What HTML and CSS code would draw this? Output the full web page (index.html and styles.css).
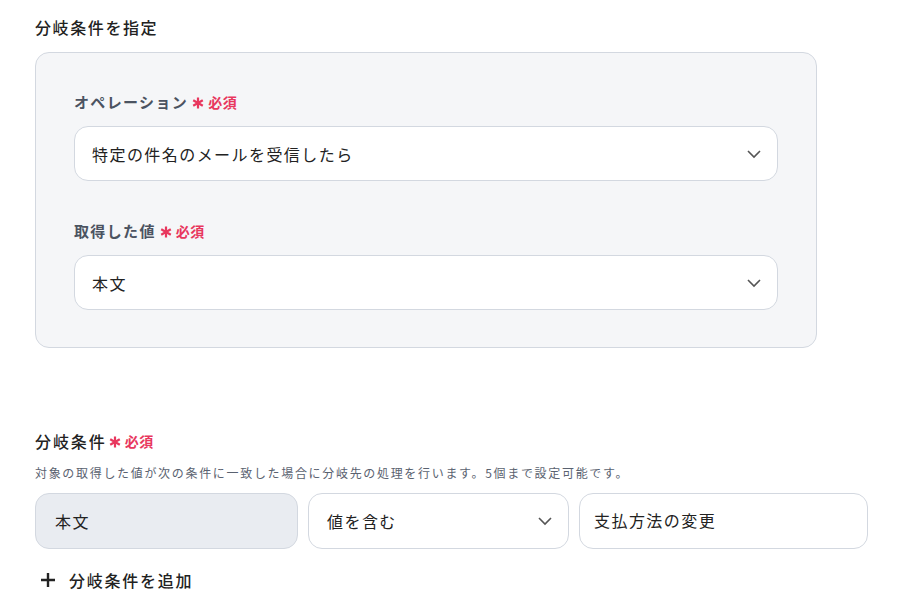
FILE: index.html
```html
<!DOCTYPE html>
<html lang="ja">
<head>
  <meta charset="UTF-8" />
  <meta name="viewport" content="width=device-width, initial-scale=1.0"/>
  <title>分岐条件を指定</title>
  <link rel="stylesheet" href="styles.css">
</head>
<body>

  <h2 class="section-title">分岐条件を指定</h2>

  <div class="panel">
    <div class="field">
      <label class="field-label">オペレーション<span class="req"><svg class="star" viewBox="0 0 12 12" width="12" height="12"><path d="M6 0.5v11M1.2 3.2l9.6 5.6M1.2 8.8l9.6-5.6" /></svg>必須</span></label>
      <div class="select">
        <span>特定の件名のメールを受信したら</span>
        <svg class="chevron" viewBox="0 0 16 10" width="16" height="10"><path d="M2 2l6 6 6-6" /></svg>
      </div>
    </div>

    <div class="field">
      <label class="field-label">取得した値<span class="req"><svg class="star" viewBox="0 0 12 12" width="12" height="12"><path d="M6 0.5v11M1.2 3.2l9.6 5.6M1.2 8.8l9.6-5.6" /></svg>必須</span></label>
      <div class="select">
        <span>本文</span>
        <svg class="chevron" viewBox="0 0 16 10" width="16" height="10"><path d="M2 2l6 6 6-6" /></svg>
      </div>
    </div>
  </div>

  <div class="conditions">
    <h3 class="cond-title">分岐条件<span class="req"><svg class="star" viewBox="0 0 12 12" width="12" height="12"><path d="M6 0.5v11M1.2 3.2l9.6 5.6M1.2 8.8l9.6-5.6" /></svg>必須</span></h3>
    <p class="hint">対象の取得した値が次の条件に一致した場合に分岐先の処理を行います。5個まで設定可能です。</p>

    <div class="cond-row">
      <div class="box box-fixed">本文</div>
      <div class="box box-select">
        <span>値を含む</span>
        <svg class="chevron" viewBox="0 0 16 10" width="16" height="10"><path d="M2 2l6 6 6-6" /></svg>
      </div>
      <div class="box box-input">支払方法の変更</div>
    </div>

    <button class="add-btn">
      <svg viewBox="0 0 16 16" width="16" height="16"><path d="M8 1v14M1 8h14" /></svg>
      分岐条件を追加
    </button>
  </div>

</body>
</html>
```

FILE: styles.css
```css
body {
  font-family: "Noto Sans CJK JP", "Noto Sans", sans-serif;
  background-color: #fff;
  color: #222;
  margin: 0;
  padding: 16px 35px 0;
}

.section-title {
  margin: 0 0 14px;
  font-size: 16px;
  font-weight: 500;
  letter-spacing: 0.1em;
  line-height: 22px;
}

.panel {
  width: 782px;
  box-sizing: border-box;
  background-color: #f5f6f8;
  border: 1px solid #d3d8e0;
  border-radius: 14px;
  padding: 38px 38px 37px;
}

.field + .field {
  margin-top: 39px;
}

.field-label {
  display: flex;
  align-items: center;
  font-size: 15px;
  font-weight: 700;
  color: #4b5361;
  letter-spacing: 0.09em;
  line-height: 22px;
  margin-bottom: 13px;
}

.req {
  display: inline-flex;
  align-items: center;
  color: #e8375e;
  font-size: 14px;
  font-weight: 700;
  letter-spacing: 0.04em;
  margin-left: 4px;
}

.star {
  margin-right: 4px;
  margin-top: 2px;
}

.star path {
  fill: none;
  stroke: #e8375e;
  stroke-width: 2.2;
}

.select {
  display: flex;
  align-items: center;
  justify-content: space-between;
  height: 55px;
  box-sizing: border-box;
  background-color: #fff;
  border: 1px solid #d3d8e0;
  border-radius: 14px;
  padding: 0 15px 0 17px;
  font-size: 16px;
  letter-spacing: 0.09em;
}

.chevron path {
  fill: none;
  stroke: #555;
  stroke-width: 1.6;
}

.conditions {
  margin-top: 82px;
}

.cond-title {
  display: flex;
  align-items: center;
  margin: 0;
  font-size: 16px;
  font-weight: 500;
  letter-spacing: 0.12em;
  line-height: 22px;
}

.cond-title .req {
  margin-left: 2px;
}

.hint {
  margin: 12px 0 11px;
  font-size: 12px;
  color: #5a6270;
  letter-spacing: 0.14em;
  line-height: 18px;
}

.cond-row {
  display: flex;
  gap: 10px;
  width: 833px;
}

.box {
  height: 56px;
  box-sizing: border-box;
  border: 1px solid #d3d8e0;
  border-radius: 14px;
  display: flex;
  align-items: center;
  padding: 0 18px;
  font-size: 16px;
  letter-spacing: 0.09em;
}

.box-fixed {
  width: 263px;
  background-color: #e9ecf1;
  padding-left: 19px;
}

.box-select {
  width: 261px;
  justify-content: space-between;
  background-color: #fff;
  padding-right: 15px;
}

.box-input {
  flex: 1;
  background-color: #fff;
  padding: 0 0 3px 14px;
}

.add-btn {
  display: flex;
  align-items: center;
  gap: 13px;
  margin-top: 19px;
  padding: 0 0 0 5px;
  background: none;
  border: none;
  font-family: inherit;
  font-size: 16px;
  font-weight: 500;
  color: #222;
  letter-spacing: 0.11em;
}

.add-btn path {
  stroke: #222;
  stroke-width: 2.4;
}
```
